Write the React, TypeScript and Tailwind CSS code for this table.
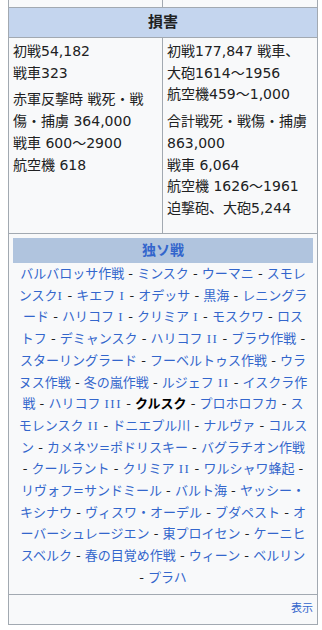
import * as React from "react";

const navLines = [
  "バルバロッサ作戦 - ミンスク - ウーマニ - スモレ",
  "ンスクⅠ - キエフ Ⅰ - オデッサ - 黒海 - レニングラ",
  "ード - ハリコフ Ⅰ - クリミア Ⅰ - モスクワ - ロス",
  "トフ - デミャンスク - ハリコフ Ⅱ - ブラウ作戦 -",
  "スターリングラード - フーベルトゥス作戦 - ウラ",
  "ヌス作戦 - 冬の嵐作戦 - ルジェフ Ⅱ - イスクラ作",
  "戦 - ハリコフ Ⅲ - クルスク - プロホロフカ - ス",
  "モレンスク Ⅱ - ドニエプル川 - ナルヴァ - コルス",
  "ン - カメネツ=ポドリスキー - バグラチオン作戦",
  "- クールラント - クリミア Ⅱ - ワルシャワ蜂起 -",
  "リヴォフ=サンドミール - バルト海 - ヤッシー・",
  "キシナウ - ヴィスワ・オーデル - ブダペスト - オ",
  "ーバーシュレージエン - 東プロイセン - ケーニヒ",
  "スベルク - 春の目覚め作戦 - ウィーン - ベルリン",
  "- プラハ",
];

const roman: Record<string, string> = { "Ⅰ": "I", "Ⅱ": "II", "Ⅲ": "III" };

// link text, with roman numerals set in a serif face
function LinkText({ text }: { text: string }) {
  const bits = text.split(/([ⅠⅡⅢ])/).filter((b) => b !== "");
  return (
    <span className="text-[#3366cc]">
      {bits.map((b, i) =>
        roman[b] ? (
          <span key={i} className="tracking-[1.5px]" style={{ fontFamily: '"Liberation Serif", serif' }}>
            {roman[b]}
          </span>
        ) : (
          <React.Fragment key={i}>{b}</React.Fragment>
        )
      )}
    </span>
  );
}

// splits a line into links and the plain " - " separators
function NavLine({ text }: { text: string }) {
  const parts = text.split(/( ?- ?)/).filter((p) => p !== "");
  return (
    <div className="whitespace-pre">
      {parts.map((p, i) => {
        if (/^ ?- ?$/.test(p)) return <span key={i}>{p}</span>;
        if (p === "クルスク") return <b key={i} className="font-bold text-black">{p}</b>;
        return <LinkText key={i} text={p} />;
      })}
    </div>
  );
}

export default function App() {
  return (
    <div
      className="min-h-[630px] w-[322px] bg-white text-[#202122]"
      style={{ fontFamily: '"DejaVu Sans", "Noto Sans CJK JP", sans-serif' }}
    >
      <div className="ml-2 w-[310px] border-x border-b border-[#a2a9b1] bg-[#f8f9fa]">
        {/* cut-off row above */}
        <div className="flex h-[8px] border-b border-[#a2a9b1]">
          <div className="w-[154px] border-r border-[#a2a9b1]" />
          <div className="flex-1" />
        </div>

        {/* 損害 header */}
        <div className="flex h-[30px] items-center justify-center border-b border-[#a2a9b1] bg-[#c4d5ee] text-[15px] font-bold">
          損害
        </div>

        {/* casualty cells */}
        <div className="flex h-[196px] border-b border-[#a2a9b1] text-[14px] leading-[21.7px]">
          <div className="w-[154px] border-r border-[#a2a9b1] pl-1 pt-[3px]">
            <div>初戦54,182</div>
            <div>戦車323</div>
            <div className="mt-[5px]">
              <div>赤軍反撃時 戦死・戦</div>
              <div>傷・捕虜 364,000</div>
              <div>戦車 600～2900</div>
              <div>航空機 618</div>
            </div>
          </div>
          <div className="flex-1 pl-1 pt-[3px]">
            <div className="whitespace-nowrap">初戦177,847 戦車、</div>
            <div>大砲1614～1956</div>
            <div>航空機459～1,000</div>
            <div className="mt-[5px]">
              <div className="whitespace-nowrap">合計戦死・戦傷・捕虜</div>
              <div>863,000</div>
              <div>戦車 6,064</div>
              <div>航空機 1626～1961</div>
              <div>迫撃砲、大砲5,244</div>
            </div>
          </div>
        </div>

        {/* navbox */}
        <div className="h-[361px] border-b border-[#a2a9b1] px-1 pt-1">
          <div className="flex h-[25px] items-center justify-center bg-[#b0c4de] text-[14px] font-bold text-[#3366cc]">
            独ソ戦
          </div>
          <div className="flex flex-col items-center text-[13px] leading-[21.7px]">
            {navLines.map((line, i) => (
              <NavLine key={i} text={line} />
            ))}
          </div>
        </div>

        {/* footer */}
        <div className="flex h-[29px] items-center justify-end pr-1 text-[11px] text-[#3366cc]">
          表示
        </div>
      </div>
    </div>
  );
}
